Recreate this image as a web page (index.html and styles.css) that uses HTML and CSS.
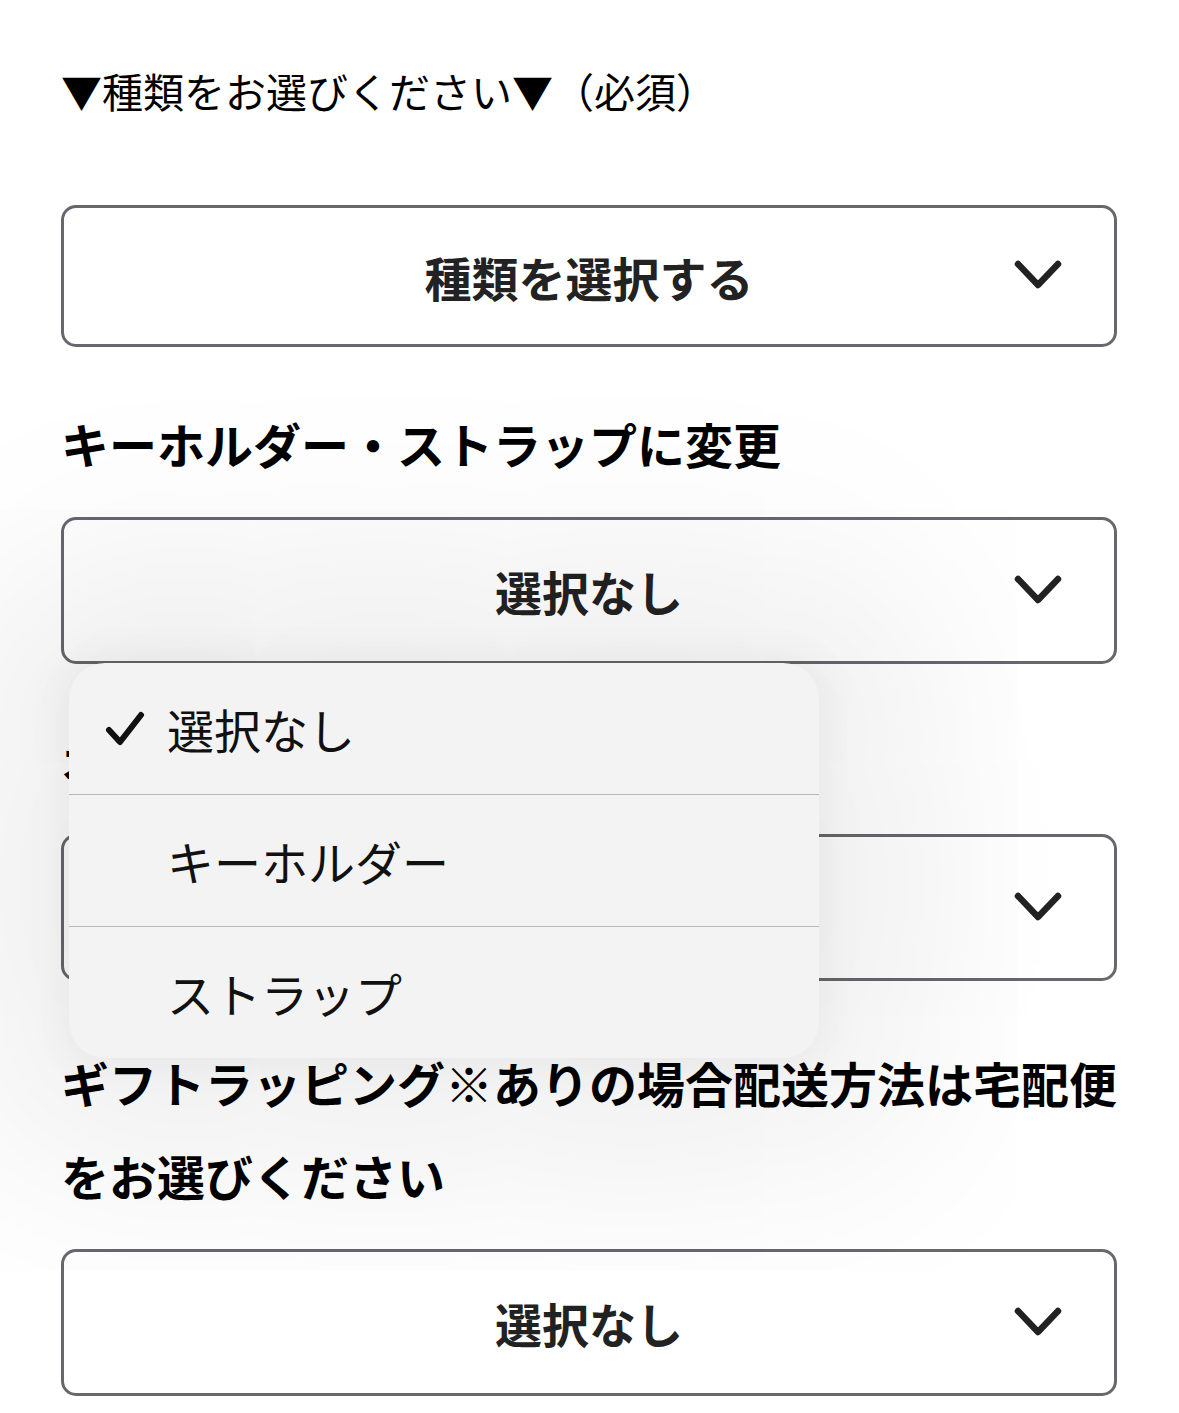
FILE: index.html
```html
<!DOCTYPE html>
<html lang="ja">
<head>
    <meta charset="UTF-8">
    <meta name="viewport" content="width=device-width, initial-scale=1.0">
    <title>オプション選択</title>
    <link rel="stylesheet" href="styles.css">
</head>
<body>

    <div class="form">
        <p class="lead">▼種類をお選びください▼（必須）</p>
        <div class="select first">
            <span class="select-value">種類を選択する</span>
            <svg class="chevron" viewBox="0 0 48 32"><path d="M4 4 L24 25 L44 4"/></svg>
        </div>

        <p class="field-label">キーホルダー・ストラップに変更</p>
        <div class="select">
            <span class="select-value">選択なし</span>
            <svg class="chevron" viewBox="0 0 48 32"><path d="M4 4 L24 25 L44 4"/></svg>
        </div>

        <p class="field-label">オプションをお選びください</p>
        <div class="select">
            <span class="select-value">選択なし</span>
            <svg class="chevron" viewBox="0 0 48 32"><path d="M4 4 L24 25 L44 4"/></svg>
        </div>

        <p class="field-label gift">ギフトラッピング※ありの場合配送方法は宅配便をお選びください</p>
        <div class="select">
            <span class="select-value">選択なし</span>
            <svg class="chevron" viewBox="0 0 48 32"><path d="M4 4 L24 25 L44 4"/></svg>
        </div>
    </div>

    <ul class="picker">
        <li class="picker-item selected">
            <svg class="check" viewBox="0 0 40 36"><path d="M4 19 L15 31 L36 4"/></svg>
            選択なし
        </li>
        <li class="picker-item">キーホルダー</li>
        <li class="picker-item">ストラップ</li>
    </ul>

</body>
</html>
```

FILE: styles.css
```css
body {
    margin: 0;
    background: #fff;
    font-family: "Noto Sans CJK JP", "Noto Sans", sans-serif;
    color: #000;
}

.form {
    padding: 44px 61px 20px 61px;
    width: 1056px;
}

.lead {
    margin: 0;
    font-size: 41px;
    line-height: 93px;
}

.field-label {
    margin: 50px -4px 0 0;
    font-size: 48px;
    font-weight: 700;
    line-height: 93px;
}

.field-label.gift {
    margin-top: 55px;
}

.select {
    display: grid;
    grid-template-columns: 1fr auto 1fr;
    align-items: center;
    box-sizing: border-box;
    height: 147px;
    margin-top: 27px;
    border: 3px solid #67676d;
    border-radius: 15px;
    background: rgba(255, 255, 255, 0.2);
    color: #222;
}

.select.first {
    margin-top: 68px;
    height: 142px;
}

.select-value {
    grid-column: 2;
    font-size: 47px;
    font-weight: 700;
}

.chevron {
    grid-column: 3;
    justify-self: end;
    width: 48px;
    height: 32px;
    margin-right: 52px;
    fill: none;
    stroke: #222;
    stroke-width: 6.5;
    stroke-linecap: round;
    stroke-linejoin: round;
}

/* native option list overlay */
.picker {
    position: absolute;
    left: 69px;
    top: 663px;
    width: 750px;
    margin: 0;
    padding: 0;
    list-style: none;
    background: #f3f3f3;
    border-radius: 36px;
    box-shadow: 0 0 40px 10px rgba(0, 0, 0, 0.045), 0 0 220px 100px rgba(0, 0, 0, 0.075);
    overflow: hidden;
}

.picker-item {
    display: flex;
    align-items: center;
    height: 132px;
    padding-left: 98px;
    font-size: 47px;
    color: #111;
    border-top: 1.5px solid #b8b8b8;
    box-sizing: border-box;
    position: relative;
}

.picker-item:first-child {
    border-top: none;
    height: 131px;
}

.check {
    position: absolute;
    left: 36px;
    top: 48px;
    width: 40px;
    height: 36px;
    fill: none;
    stroke: #111;
    stroke-width: 6;
    stroke-linecap: round;
    stroke-linejoin: round;
}
```
